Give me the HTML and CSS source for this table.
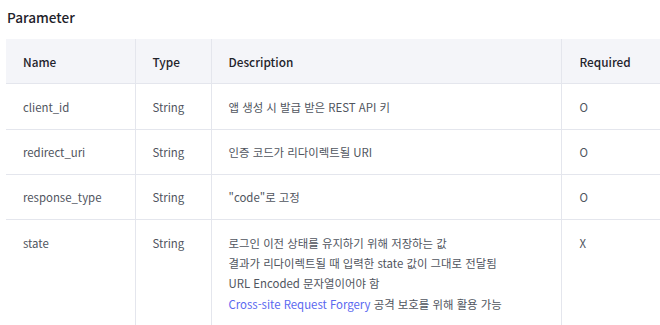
FILE: index.html
```html
<!DOCTYPE html>
<html lang="ko">
<head>
<meta charset="utf-8">
<link rel="stylesheet" href="styles.css">
</head>
<body>
<div class="page">
  <h3 class="title">Parameter</h3>
  <table class="params">
    <colgroup>
      <col class="c-name"><col class="c-type"><col class="c-desc"><col class="c-req">
    </colgroup>
    <thead>
      <tr><th>Name</th><th>Type</th><th>Description</th><th>Required</th></tr>
    </thead>
    <tbody>
      <tr><td>client_id</td><td>String</td><td>앱 생성 시 발급 받은 REST API 키</td><td>O</td></tr>
      <tr><td>redirect_uri</td><td>String</td><td>인증 코드가 리다이렉트될 URI</td><td>O</td></tr>
      <tr><td>response_type</td><td>String</td><td>"code"로 고정</td><td>O</td></tr>
      <tr><td>state</td><td>String</td><td>로그인 이전 상태를 유지하기 위해 저장하는 값<br>결과가 리다이렉트될 때 입력한 state 값이 그대로 전달됨<br>URL Encoded 문자열이어야 함<br><a class="link" href="#">Cross-site Request Forgery</a> 공격 보호를 위해 활용 가능</td><td>X</td></tr>
    </tbody>
  </table>
</div>
</body>
</html>
```

FILE: styles.css
```css
html, body {
  margin: 0;
  padding: 0;
  background: #fff;
  overflow: hidden;
}
.page {
  padding: 0 0 0 6px;
  font-family: "Noto Sans CJK KR", "Noto Sans", sans-serif;
  color: #555a62;
}
.title {
  margin: 0;
  padding: 7px 0 0 1px;
  font-size: 13.6px;
  line-height: 20px;
  font-weight: 500;
  color: #1f232b;
}
.params {
  margin-top: 12px;
  width: 654px;
  border-collapse: collapse;
  table-layout: fixed;
  font-size: 11.4px;
}
.c-name { width: 129px; }
.c-type { width: 76px; }
.c-desc { width: 350px; }
.c-req { width: 99px; }
.params th, .params td {
  text-align: left;
  vertical-align: top;
  padding: 12.5px 17px 11.5px 17px;
  line-height: 20.3px;
  border: 1px solid #e4e6ed;
  border-top: none;
}
.params th:first-child, .params td:first-child {
  border-left: none;
}
.params th:last-child, .params td:last-child {
  border-right: none;
  padding-left: 18px;
}
.params thead th {
  background: #f4f5f9;
  color: #1f232b;
  font-weight: 500;
  font-size: 11.8px;
  border-bottom: 1px solid #e4e6ed;
}
.params td {
  color: #50555e;
}
.link {
  color: #5a68f0;
  text-decoration: none;
}
```
